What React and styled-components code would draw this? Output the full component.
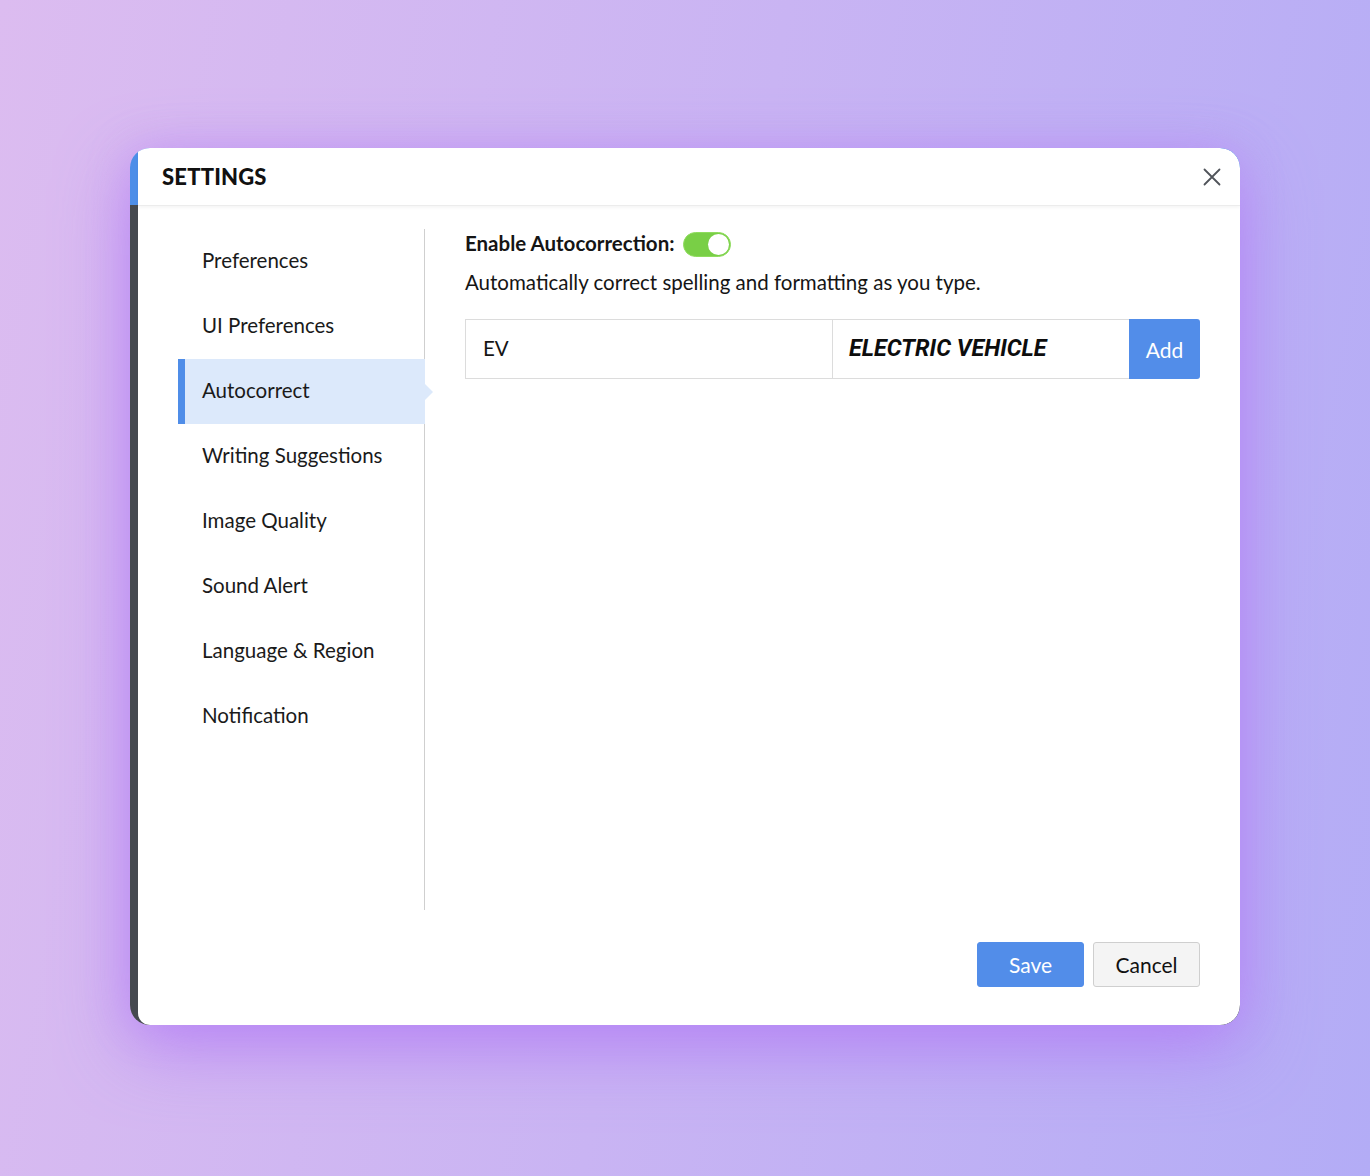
import React, { useState } from "react";
import styled, { createGlobalStyle } from "styled-components";

const Global = createGlobalStyle`
  html, body { margin: 0; padding: 0; }
  body {
    font-family: Lato, "Open Sans", sans-serif;
    background: linear-gradient(100deg, #dcbcf0 0%, #c9b4f3 50%, #b3acf6 100%);
    min-height: 1176px;
    color: #151515;
  }
  * { box-sizing: border-box; }
`;

const Page = styled.div`
  width: 1370px;
  height: 1176px;
  padding: 148px 0 0 130px;
`;

const Dialog = styled.div`
  width: 1110px;
  height: 877px;
  border-radius: 20px;
  overflow: hidden;
  display: flex;
  background: linear-gradient(to bottom, #4d8ee8 0, #4d8ee8 57px, #45494f 57px);
  padding-left: 8px;
  box-shadow: 0 24px 70px rgba(176, 120, 245, 0.75), 0 0 40px rgba(190, 140, 245, 0.4);
`;

const Panel = styled.div`
  flex: 1;
  background: #fff;
  border-radius: 0 20px 20px 12px;
  display: flex;
  flex-direction: column;
`;

const Header = styled.div`
  height: 58px;
  display: flex;
  align-items: center;
  justify-content: space-between;
  padding: 0 18px 0 24px;
  border-bottom: 1px solid #ececec;
  box-shadow: 0 2px 3px rgba(0, 0, 0, 0.04);
`;

const Title = styled.h1`
  margin: 0;
  font-size: 22px;
  font-weight: 900;
  letter-spacing: 0.2px;
  color: #111;
`;

const CloseButton = styled.button`
  border: 0;
  background: none;
  padding: 0;
  width: 20px;
  height: 20px;
  display: flex;
  align-items: center;
  justify-content: center;
  cursor: pointer;
`;

const Body = styled.div`
  display: flex;
  flex: 1;
  padding-top: 23px;
`;

const Sidebar = styled.nav`
  width: 287px;
  height: 681px;
  padding-left: 40px;
  border-right: 1px solid #cfcfcf;
  display: flex;
  flex-direction: column;
`;

const NavItem = styled.div`
  position: relative;
  height: 65px;
  display: flex;
  align-items: center;
  padding-left: ${(p) => (p.$active ? "17px" : "24px")};
  padding-bottom: 3px;
  font-size: 20.5px;
  color: #1a1a1a;
  background: ${(p) => (p.$active ? "#dce9fb" : "transparent")};
  border-left: ${(p) => (p.$active ? "7px solid #4f8de8" : "0")};
  margin-right: -1px;
  cursor: pointer;
  &::after {
    content: "";
    display: ${(p) => (p.$active ? "block" : "none")};
    position: absolute;
    right: -8px;
    top: 50%;
    transform: translateY(-50%);
    border-top: 8px solid transparent;
    border-bottom: 8px solid transparent;
    border-left: 8px solid #dce9fb;
  }
`;

const Content = styled.div`
  flex: 1;
  padding: 2px 40px 0 40px;
`;

const ToggleRow = styled.div`
  display: flex;
  align-items: center;
  gap: 8px;
  height: 26px;
`;

const Label = styled.span`
  font-size: 20.5px;
  font-weight: 700;
  color: #151515;
  margin-top: -2px;
`;

const Toggle = styled.button`
  width: 48px;
  height: 25px;
  border-radius: 13px;
  border: 1px solid #8fdc5e;
  background: ${(p) => (p.$on ? "#79cf46" : "#ccc")};
  padding: 1px;
  display: flex;
  justify-content: ${(p) => (p.$on ? "flex-end" : "flex-start")};
  align-items: center;
  cursor: pointer;
`;

const Knob = styled.span`
  width: 21px;
  height: 21px;
  border-radius: 50%;
  background: #fff;
`;

const Description = styled.p`
  margin: 12px 0 0;
  font-size: 20.5px;
  color: #151515;
  line-height: 26px;
`;

const EntryRow = styled.div`
  margin-top: 24px;
  display: flex;
  height: 60px;
`;

const Field = styled.div`
  width: ${(p) => p.$w}px;
  border: 1px solid #dcdcdc;
  border-right: ${(p) => (p.$last ? "0" : "1px solid #dcdcdc")};
  margin-right: ${(p) => (p.$last ? "0" : "-1px")};
  display: flex;
  align-items: center;
  padding-left: 17px;
  padding-bottom: 2px;
  font-size: 20.5px;
  color: #151515;
`;

const Replacement = styled(Field)`
  font-family: Roboto, "Liberation Sans", sans-serif;
  font-style: italic;
  font-weight: 700;
  font-size: 23.3px;
  padding-left: 16px;
  color: #0d0d0d;
`;

const AddButton = styled.button`
  width: 71px;
  border: 0;
  border-radius: 0 3px 3px 0;
  background: #528de9;
  color: #fff;
  font-family: Lato, sans-serif;
  font-size: 21px;
  cursor: pointer;
`;

const Footer = styled.div`
  display: flex;
  justify-content: flex-end;
  gap: 9px;
  padding: 0 40px 38px 0;
`;

const Button = styled.button`
  width: 107px;
  height: 45px;
  border-radius: 3px;
  font-family: Lato, sans-serif;
  font-size: 21px;
  padding-bottom: 2px;
  cursor: pointer;
  border: 1px solid ${(p) => (p.$primary ? "#528de9" : "#cfcfcf")};
  background: ${(p) => (p.$primary ? "#528de9" : "#f4f4f4")};
  color: ${(p) => (p.$primary ? "#fff" : "#111")};
`;

const items = [
  "Preferences",
  "UI Preferences",
  "Autocorrect",
  "Writing Suggestions",
  "Image Quality",
  "Sound Alert",
  "Language & Region",
  "Notification",
];

export default function App() {
  const [on, setOn] = useState(true);
  return (
    <>
      <Global />
      <Page>
        <Dialog>
          <Panel>
            <Header>
              <Title>SETTINGS</Title>
              <CloseButton aria-label="Close">
                <svg width="18" height="18" viewBox="0 0 18 18">
                  <path d="M1.5 1.5 L16.5 16.5 M16.5 1.5 L1.5 16.5" stroke="#50545a" strokeWidth="1.8" strokeLinecap="round" />
                </svg>
              </CloseButton>
            </Header>
            <Body>
              <Sidebar>
                {items.map((it) => (
                  <NavItem key={it} $active={it === "Autocorrect"}>
                    {it}
                  </NavItem>
                ))}
              </Sidebar>
              <Content>
                <ToggleRow>
                  <Label>Enable Autocorrection:</Label>
                  <Toggle $on={on} onClick={() => setOn(!on)}>
                    <Knob />
                  </Toggle>
                </ToggleRow>
                <Description>Automatically correct spelling and formatting as you type.</Description>
                <EntryRow>
                  <Field $w={368}>EV</Field>
                  <Replacement $w={297} $last>ELECTRIC VEHICLE</Replacement>
                  <AddButton>Add</AddButton>
                </EntryRow>
              </Content>
            </Body>
            <Footer>
              <Button $primary>Save</Button>
              <Button>Cancel</Button>
            </Footer>
          </Panel>
        </Dialog>
      </Page>
    </>
  );
}
